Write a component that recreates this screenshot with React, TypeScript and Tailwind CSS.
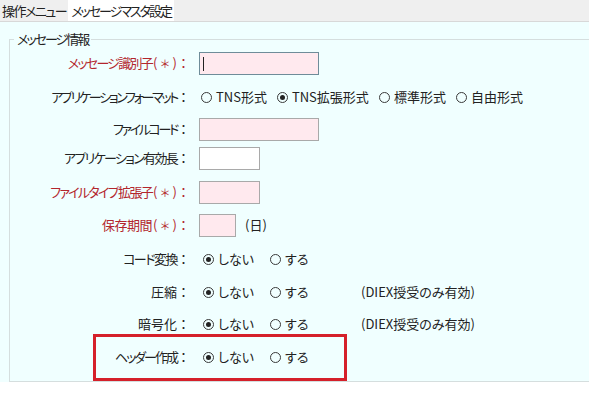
import React from "react";

const Radio = ({ checked }: { checked?: boolean }) => (
  <span className="inline-flex h-[11px] w-[11px] shrink-0 items-center justify-center rounded-full border border-[#3a3a3a]">
    {checked && <span className="h-[5px] w-[5px] rounded-full bg-[#222]" />}
  </span>
);

const Opt = ({ checked, label, w }: { checked?: boolean; label: string; w?: string }) => (
  <span className={`inline-flex items-center gap-[4px] ${w ?? ""}`}>
    <Radio checked={checked} />
    <span>{label}</span>
  </span>
);

const Row = ({
  label,
  req,
  mt,
  tr,
  children,
}: {
  label: string;
  req?: boolean;
  mt: string;
  tr: string;
  children: React.ReactNode;
}) => (
  <div className={`relative flex h-[28px] items-center ${mt}`}>
    <div className={`flex w-[180px] justify-end whitespace-nowrap ${req ? "text-[#b3262d]" : "text-[#222]"}`}>
      <span className={tr}>{label}</span>
      {req && (
        <span className="flex w-[25px] justify-between pl-[1px]">
          <span>(</span>
          <span className="text-[11px]">＊</span>
          <span>)</span>
        </span>
      )}
      <span className="w-[13px] text-center [font-feature-settings:normal]">：</span>
    </div>
    <div className="ml-[9px] flex items-center">{children}</div>
  </div>
);

const Input = ({ w, pink, focus }: { w: string; pink?: boolean; focus?: boolean }) => (
  <div
    className={`relative h-[23px] ${w} border ${focus ? "border-[#6f8c99]" : "border-[#a9a9a9]"} ${pink ? "bg-[#ffe9ee]" : "bg-white"}`}
  >
    {focus && <span className="absolute left-[3px] top-[4px] h-[14px] w-[1px] bg-[#222]" />}
  </div>
);

const YesNo = ({ note }: { note?: boolean }) => (
  <div className="ml-[4px] flex items-center">
    <Opt checked label="しない" w="w-[67px]" />
    <Opt label="する" w="w-[91px]" />
    {note && <span>(DIEX授受のみ有効)</span>}
  </div>
);

export default function App() {
  return (
    <div className="h-[396px] w-[589px] overflow-hidden bg-white font-['Noto_Sans_CJK_JP',sans-serif] text-[13px] leading-[14px] text-[#222] [font-feature-settings:'palt']">
      <div className="flex h-[22px] border-b border-[#d8d8d8] bg-[#efefef]">
        <div className="flex items-center pl-[2px] pr-[2px] tracking-[-1.5px]">操作メニュー</div>
        <div className="flex items-center bg-white px-[3px] tracking-[-2px]">メッセージマスタ設定</div>
      </div>
      <div className="bg-[#f0ffff] pt-[10px]">
        <fieldset className="ml-[9px] mr-[-20px] border border-[#d5dede] pb-[10px] pt-[3px]">
          <legend className="ml-[4px] px-[3px] leading-[14px] tracking-[-2px]">メッセージ情報</legend>
          <Row label="メッセージ識別子" req tr="tracking-[-1.75px]" mt="mt-0">
            <Input w="w-[120px]" pink focus />
          </Row>
          <Row label="アプリケーションフォーマット" tr="tracking-[-2.3px]" mt="mt-[6px]">
            <div className="ml-[2px] flex items-center gap-[10px]">
              <Opt label="TNS形式" />
              <Opt checked label="TNS拡張形式" />
              <Opt label="標準形式" />
              <Opt label="自由形式" />
            </div>
          </Row>
          <Row label="ファイルコード" tr="tracking-[-2.3px]" mt="mt-[4px]">
            <Input w="w-[120px]" pink />
          </Row>
          <Row label="アプリケーション有効長" tr="tracking-[-1.7px]" mt="mt-[1px]">
            <Input w="w-[61px]" />
          </Row>
          <Row label="ファイルタイプ拡張子" req tr="tracking-[-1.7px]" mt="mt-[6px]">
            <Input w="w-[61px]" pink />
          </Row>
          <Row label="保存期間" req tr="tracking-[-0.5px]" mt="mt-[5px]">
            <Input w="w-[37px]" pink />
            <span className="ml-[9px]">(日)</span>
          </Row>
          <Row label="コード変換" tr="tracking-[-1.5px]" mt="mt-[6px]">
            <YesNo />
          </Row>
          <Row label="圧縮" tr="tracking-[0px]" mt="mt-[5px]">
            <YesNo note />
          </Row>
          <Row label="暗号化" tr="tracking-[0px]" mt="mt-[4px]">
            <YesNo note />
          </Row>
          <Row label="ヘッダー作成" tr="tracking-[-2px]" mt="mt-[5px]">
            <YesNo />
            <div className="pointer-events-none absolute left-[83px] top-[-9px] h-[47px] w-[254px] border-[3px] border-[#d5202a]" />
          </Row>
        </fieldset>
      </div>
    </div>
  );
}
